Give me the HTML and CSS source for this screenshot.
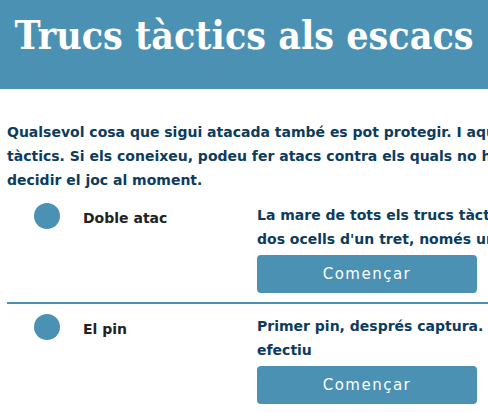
FILE: index.html
```html
<!DOCTYPE html>
<html lang="ca">
<head>
<meta charset="utf-8">
<title>Trucs tàctics als escacs</title>
<link rel="stylesheet" href="styles.css">
</head>
<body>
<header class="hero">
  <h1 class="hero-title">Trucs tàctics als escacs</h1>
</header>
<main class="content">
  <p class="intro">Qualsevol cosa que sigui atacada també es pot protegir. I aquí és on entren els trucs<br>tàctics. Si els coneixeu, podeu fer atacs contra els quals no hi ha defensa i així<br>decidir el joc al moment.</p>
  <ul class="lessons">
    <li class="lesson">
      <span class="dot"></span>
      <span class="lesson-name">Doble atac</span>
      <div class="lesson-body">
        <p class="lesson-desc">La mare de tots els trucs tàctics: ataqueu dues peces alhora i mateu<br>dos ocells d'un tret, només una pot escapar.</p>
        <button class="start">Començar</button>
      </div>
    </li>
    <li class="lesson">
      <span class="dot"></span>
      <span class="lesson-name">El pin</span>
      <div class="lesson-body">
        <p class="lesson-desc">Primer pin, després captura. La clavada és un truc tàctic molt<br>efectiu</p>
        <button class="start">Començar</button>
      </div>
    </li>
  </ul>
</main>
</body>
</html>
```
FILE: styles.css
```css
html, body {
  margin: 0;
  padding: 0;
  overflow: hidden;
  background: #ffffff;
}
body {
  width: 488px;
  font-family: "DejaVu Sans", "Open Sans", sans-serif;
}
.hero {
  background: #4b91b3;
  height: 89px;
  padding-top: 11px;
  box-sizing: border-box;
}
.hero-title {
  margin: 0;
  text-align: center;
  color: #ffffff;
  font-family: "DejaVu Serif", "Liberation Serif", serif;
  font-stretch: condensed;
  font-weight: 700;
  font-size: 39px;
  line-height: 48px;
  white-space: nowrap;
}
.content {
  padding: 0 0 0 7px;
  width: 700px;
}
.intro {
  margin: 31px 0 0 0;
  color: #0d3b5e;
  font-size: 14px;
  font-weight: 700;
  line-height: 24px;
  white-space: nowrap;
}
.lessons {
  list-style: none;
  margin: 1px 0 0 0;
  padding: 0;
}
.lesson {
  display: flex;
  align-items: flex-start;
  padding: 10px 0 9px 0;
  border-bottom: 2px solid #4b91b3;
}
.lesson:last-child {
  border-bottom: none;
}
.dot {
  flex: none;
  width: 26px;
  height: 26px;
  border-radius: 50%;
  background: #4b91b3;
  margin-left: 27px;
}
.lesson-name {
  flex: none;
  width: 174px;
  margin-left: 23px;
  color: #222222;
  font-size: 14px;
  font-weight: 600;
  line-height: 30px;
}
.lesson-body {
  flex: 1;
}
.lesson-desc {
  margin: 0;
  color: #0d3b5e;
  font-size: 14px;
  font-weight: 700;
  line-height: 24px;
  white-space: nowrap;
}
.start {
  display: block;
  margin-top: 4px;
  width: 220px;
  height: 38px;
  border: none;
  border-radius: 4px;
  background: #4b91b3;
  color: #ffffff;
  font-family: "DejaVu Sans", "Open Sans", sans-serif;
  font-size: 15px;
  letter-spacing: 1.5px;
  padding: 0;
}
```
